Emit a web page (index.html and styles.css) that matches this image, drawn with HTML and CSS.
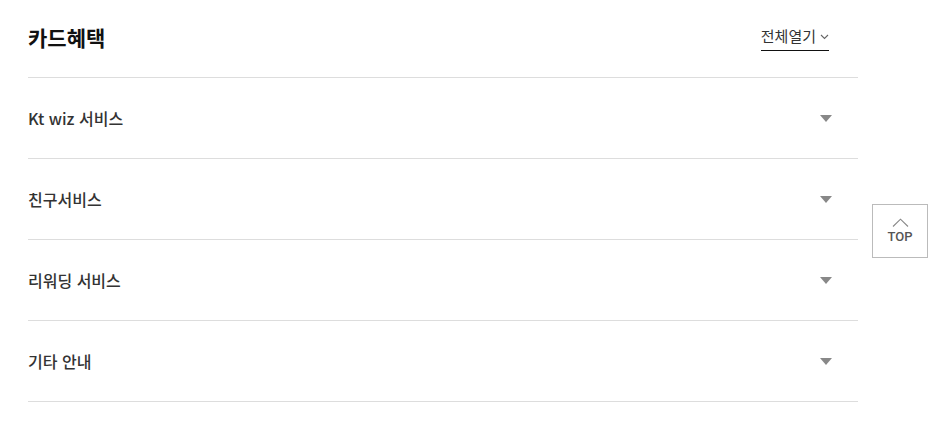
FILE: index.html
```html
<!DOCTYPE html>
<html lang="ko">
<head>
<meta charset="utf-8">
<link rel="stylesheet" href="styles.css">
</head>
<body>
<div class="wrap">
  <div class="head">
    <h2 class="title">카드혜택</h2>
    <button class="toggle-all">전체열기 <svg class="chev" width="9" height="6" viewBox="0 0 9 6"><path d="M1 1l3.5 3.5L8 1" fill="none" stroke="#666" stroke-width="1.1"/></svg></button>
  </div>
  <div class="row"><span>Kt wiz 서비스</span><i class="tri"></i></div>
  <div class="row"><span>친구서비스</span><i class="tri"></i></div>
  <div class="row"><span>리워딩 서비스</span><i class="tri"></i></div>
  <div class="row"><span>기타 안내</span><i class="tri"></i></div>
</div>
<a class="top" href="#"><svg width="17" height="9" viewBox="0 0 17 9"><path d="M1 8.5L8.5 1.2 16 8.5" fill="none" stroke="#888" stroke-width="1.1"/></svg><span>TOP</span></a>
</body>
</html>
```
FILE: styles.css
```css
html,body{margin:0;padding:0;background:#fff;}
body{font-family:"Noto Sans CJK KR","Noto Sans",sans-serif;color:#333;}
.wrap{width:830px;margin-left:28px;}
.head{height:77px;border-bottom:1px solid #ddd;display:flex;justify-content:space-between;align-items:flex-start;}
.title{margin:22px 0 0;font-size:21px;line-height:30px;font-weight:700;color:#111;}
.toggle-all{margin:25px 29px 0 0;padding:0 0 4px;border:0;border-bottom:1px solid #111;background:none;font-family:inherit;font-size:15px;line-height:21px;color:#333;display:flex;align-items:center;gap:4px;cursor:pointer;}
.chev{margin-top:2px;}
.row{height:80px;border-bottom:1px solid #ddd;display:flex;align-items:center;justify-content:space-between;font-size:16px;font-weight:500;color:#333;}
.tri{width:0;height:0;border-left:6px solid transparent;border-right:6px solid transparent;border-top:7px solid #888;margin-right:26px;}
.top{position:absolute;left:872px;top:204px;width:54px;height:52px;border:1px solid #bbb;display:flex;flex-direction:column;align-items:center;justify-content:center;text-decoration:none;color:#555;font-family:Roboto,"Noto Sans",sans-serif;font-size:13px;font-weight:500;line-height:14px;gap:3px;background:#fff;}
```
